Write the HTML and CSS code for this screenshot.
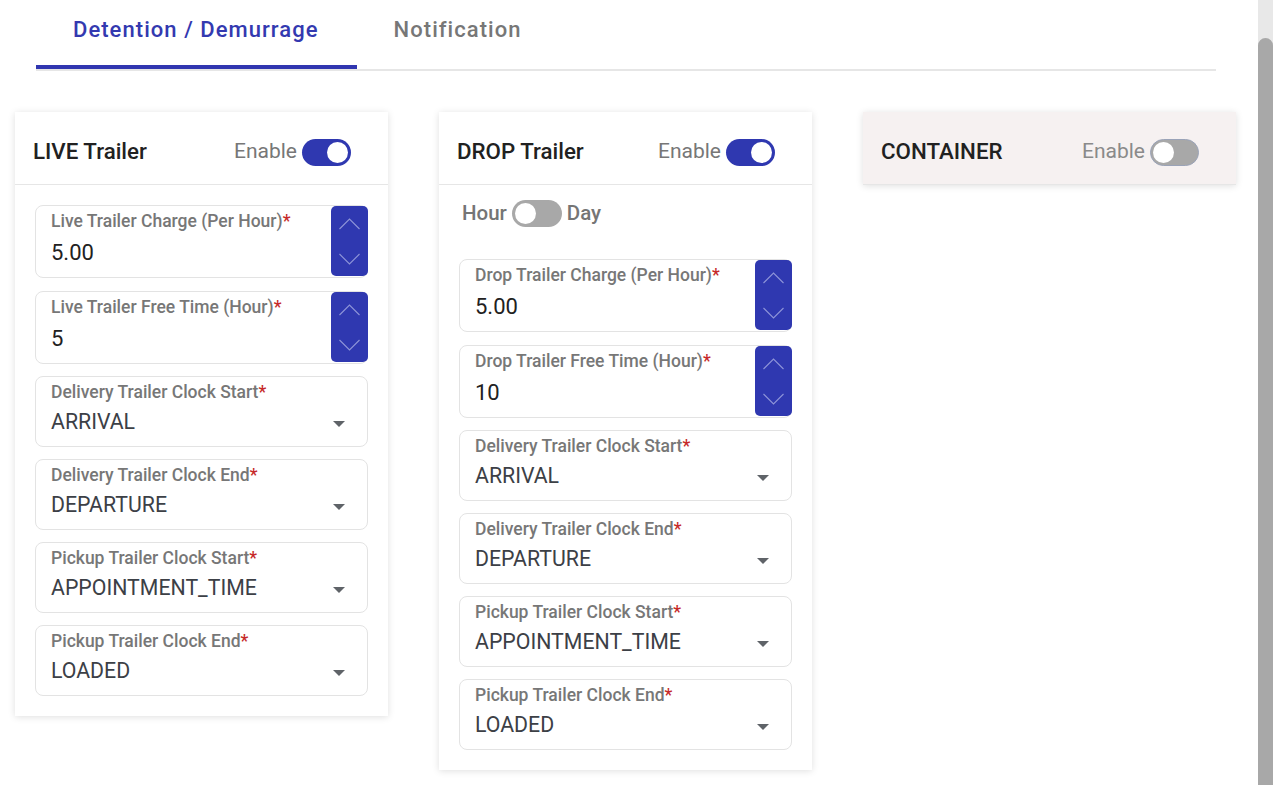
FILE: index.html
```html
<!DOCTYPE html>
<html lang="en">
<head>
<meta charset="utf-8">
<title>Detention / Demurrage</title>
<link rel="stylesheet" href="styles.css">
</head>
<body>
<div class="page">
  <div class="main">
    <div class="tabs">
      <div class="tab active">Detention / Demurrage</div>
      <div class="tab">Notification</div>
    </div>
    <div class="cards">
      <div class="card">
        <div class="card-head">
          <div class="card-title">LIVE Trailer</div>
          <div class="enable"><span>Enable</span><span class="toggle on"><span class="knob"></span></span></div>
        </div>
        <div class="card-body">
          <div class="field num">
            <div class="field-main">
              <div class="label">Live Trailer Charge (Per Hour)<span class="req">*</span></div>
              <div class="value">5.00</div>
            </div>
            <div class="spin"><svg width="37" height="70" viewBox="0 0 37 70"><polyline points="8.5,23 18.5,13 28.5,23" fill="none" stroke="#8e94d8" stroke-width="1.1"/><polyline points="8.5,48 18.5,58 28.5,48" fill="none" stroke="#8e94d8" stroke-width="1.1"/></svg></div>
          </div>
          <div class="field num">
            <div class="field-main">
              <div class="label">Live Trailer Free Time (Hour)<span class="req">*</span></div>
              <div class="value">5</div>
            </div>
            <div class="spin"><svg width="37" height="70" viewBox="0 0 37 70"><polyline points="8.5,23 18.5,13 28.5,23" fill="none" stroke="#8e94d8" stroke-width="1.1"/><polyline points="8.5,48 18.5,58 28.5,48" fill="none" stroke="#8e94d8" stroke-width="1.1"/></svg></div>
          </div>
          <div class="field sel">
            <div class="label">Delivery Trailer Clock Start<span class="req">*</span></div>
            <div class="sel-row"><span class="sel-value">ARRIVAL</span><svg class="caret" width="12" height="6" viewBox="0 0 12 6"><polygon points="0,0 12,0 6,6" fill="#5f6368"/></svg></div>
          </div>
          <div class="field sel">
            <div class="label">Delivery Trailer Clock End<span class="req">*</span></div>
            <div class="sel-row"><span class="sel-value">DEPARTURE</span><svg class="caret" width="12" height="6" viewBox="0 0 12 6"><polygon points="0,0 12,0 6,6" fill="#5f6368"/></svg></div>
          </div>
          <div class="field sel">
            <div class="label">Pickup Trailer Clock Start<span class="req">*</span></div>
            <div class="sel-row"><span class="sel-value">APPOINTMENT_TIME</span><svg class="caret" width="12" height="6" viewBox="0 0 12 6"><polygon points="0,0 12,0 6,6" fill="#5f6368"/></svg></div>
          </div>
          <div class="field sel">
            <div class="label">Pickup Trailer Clock End<span class="req">*</span></div>
            <div class="sel-row"><span class="sel-value">LOADED</span><svg class="caret" width="12" height="6" viewBox="0 0 12 6"><polygon points="0,0 12,0 6,6" fill="#5f6368"/></svg></div>
          </div>
        </div>
      </div>

      <div class="card">
        <div class="card-head">
          <div class="card-title">DROP Trailer</div>
          <div class="enable"><span>Enable</span><span class="toggle on"><span class="knob"></span></span></div>
        </div>
        <div class="card-body">
          <div class="hour-row"><span>Hour</span><span class="toggle off"><span class="knob"></span></span><span>Day</span></div>
          <div class="field num">
            <div class="field-main">
              <div class="label">Drop Trailer Charge (Per Hour)<span class="req">*</span></div>
              <div class="value">5.00</div>
            </div>
            <div class="spin"><svg width="37" height="70" viewBox="0 0 37 70"><polyline points="8.5,23 18.5,13 28.5,23" fill="none" stroke="#8e94d8" stroke-width="1.1"/><polyline points="8.5,48 18.5,58 28.5,48" fill="none" stroke="#8e94d8" stroke-width="1.1"/></svg></div>
          </div>
          <div class="field num">
            <div class="field-main">
              <div class="label">Drop Trailer Free Time (Hour)<span class="req">*</span></div>
              <div class="value">10</div>
            </div>
            <div class="spin"><svg width="37" height="70" viewBox="0 0 37 70"><polyline points="8.5,23 18.5,13 28.5,23" fill="none" stroke="#8e94d8" stroke-width="1.1"/><polyline points="8.5,48 18.5,58 28.5,48" fill="none" stroke="#8e94d8" stroke-width="1.1"/></svg></div>
          </div>
          <div class="field sel">
            <div class="label">Delivery Trailer Clock Start<span class="req">*</span></div>
            <div class="sel-row"><span class="sel-value">ARRIVAL</span><svg class="caret" width="12" height="6" viewBox="0 0 12 6"><polygon points="0,0 12,0 6,6" fill="#5f6368"/></svg></div>
          </div>
          <div class="field sel">
            <div class="label">Delivery Trailer Clock End<span class="req">*</span></div>
            <div class="sel-row"><span class="sel-value">DEPARTURE</span><svg class="caret" width="12" height="6" viewBox="0 0 12 6"><polygon points="0,0 12,0 6,6" fill="#5f6368"/></svg></div>
          </div>
          <div class="field sel">
            <div class="label">Pickup Trailer Clock Start<span class="req">*</span></div>
            <div class="sel-row"><span class="sel-value">APPOINTMENT_TIME</span><svg class="caret" width="12" height="6" viewBox="0 0 12 6"><polygon points="0,0 12,0 6,6" fill="#5f6368"/></svg></div>
          </div>
          <div class="field sel">
            <div class="label">Pickup Trailer Clock End<span class="req">*</span></div>
            <div class="sel-row"><span class="sel-value">LOADED</span><svg class="caret" width="12" height="6" viewBox="0 0 12 6"><polygon points="0,0 12,0 6,6" fill="#5f6368"/></svg></div>
          </div>
        </div>
      </div>

      <div class="card muted">
        <div class="card-head">
          <div class="card-title">CONTAINER</div>
          <div class="enable dim"><span>Enable</span><span class="toggle off outlined"><span class="knob"></span></span></div>
        </div>
      </div>
    </div>
  </div>
  <div class="scrollbar"><div class="thumb"></div></div>
</div>
</body>
</html>
```

FILE: styles.css
```css
html, body {
  margin: 0;
  padding: 0;
  background: #ffffff;
}
body {
  font-family: Roboto, "Liberation Sans", Arial, sans-serif;
  color: #212121;
}
.page {
  display: flex;
  height: 785px;
  overflow: hidden;
}
.main {
  flex: 1;
  min-width: 0;
}
.scrollbar {
  width: 15px;
  background: #e8e8e8;
  display: flex;
  flex-direction: column;
  padding-top: 38px;
  box-sizing: border-box;
}
.thumb {
  flex: 1;
  background: #a8a8a8;
  border-radius: 8px 8px 0 0;
}

/* tabs */
.tabs {
  display: flex;
  margin: 0 42px 0 36px;
  border-bottom: 2px solid #e6e6e6;
  height: 71px;
  box-sizing: border-box;
}
.tab {
  height: 69px;
  box-sizing: border-box;
  padding: 17px 38px 0 37px;
  font-size: 22px;
  line-height: 26px;
  letter-spacing: 1.05px;
  font-weight: 500;
  color: #777777;
}
.tab.active {
  color: #3339b0;
  border-bottom: 4px solid #3036b0;
}

/* cards */
.cards {
  display: flex;
  align-items: flex-start;
  gap: 51px;
  padding-left: 15px;
  margin-top: 41px;
}
.card {
  width: 373px;
  background: #ffffff;
  box-shadow: 0 1px 7px rgba(0, 0, 0, 0.13);
}
.card.muted {
  background: #f6f1f1;
}
.card-head {
  height: 73px;
  box-sizing: border-box;
  border-bottom: 1px solid #e6e6e6;
  display: flex;
  align-items: center;
  justify-content: space-between;
  padding: 5px 37px 0 18px;
}
.card-title {
  font-size: 22.3px;
  font-weight: 500;
  color: #212121;
}
.enable {
  display: flex;
  align-items: center;
  gap: 5px;
  font-size: 21px;
  color: #777777;
}
.enable.dim {
  color: #8a8a8a;
}
.toggle {
  width: 49px;
  height: 27px;
  border-radius: 14px;
  box-sizing: border-box;
  display: flex;
  align-items: center;
  padding: 0 3px;
  margin-top: 3px;
}
.toggle.on {
  background: #2f38b0;
  justify-content: flex-end;
}
.toggle.off {
  background: #a8a8a8;
  justify-content: flex-start;
}
.toggle.outlined {
  border: 1px solid #9aa3b8;
  padding: 0 2px;
}
.knob {
  width: 21px;
  height: 21px;
  border-radius: 50%;
  background: #ffffff;
}

.card-body {
  padding: 20px;
  display: flex;
  flex-direction: column;
  gap: 13px;
}
.hour-row {
  display: flex;
  align-items: center;
  gap: 5px;
  height: 27px;
  margin: -6px 0 20px 3px;
  font-size: 20.5px;
  font-weight: 500;
  color: #757575;
}
.hour-row .toggle {
  margin-top: 1px;
  width: 50px;
}

.field {
  border: 1px solid #e3e3e3;
  border-radius: 8px;
  box-sizing: border-box;
}
.field.num {
  height: 73px;
  display: flex;
  align-items: flex-start;
}
.field.sel {
  height: 71px;
  padding: 5px 22px 0 15px;
  margin-top: -1px;
}
.field-main {
  flex: 1;
  padding: 5px 12px 0 15px;
}
.label {
  font-size: 17.5px;
  line-height: 20px;
  font-weight: 500;
  color: #777777;
  white-space: nowrap;
}
.req {
  color: #c62828;
}
.value {
  margin-top: 10px;
  font-size: 22px;
  line-height: 24px;
  color: #212121;
}
.spin {
  width: 37px;
  height: 70px;
  flex: none;
  margin-right: -1px;
  background: #2f38b0;
  border-radius: 5px;
  display: flex;
}
.sel-row {
  display: flex;
  align-items: center;
  justify-content: space-between;
  margin-top: 8px;
  height: 24px;
}
.sel-value {
  font-size: 21.3px;
  line-height: 24px;
  color: #3c4046;
}
.caret {
  display: block;
  margin-top: 3px;
}
```
